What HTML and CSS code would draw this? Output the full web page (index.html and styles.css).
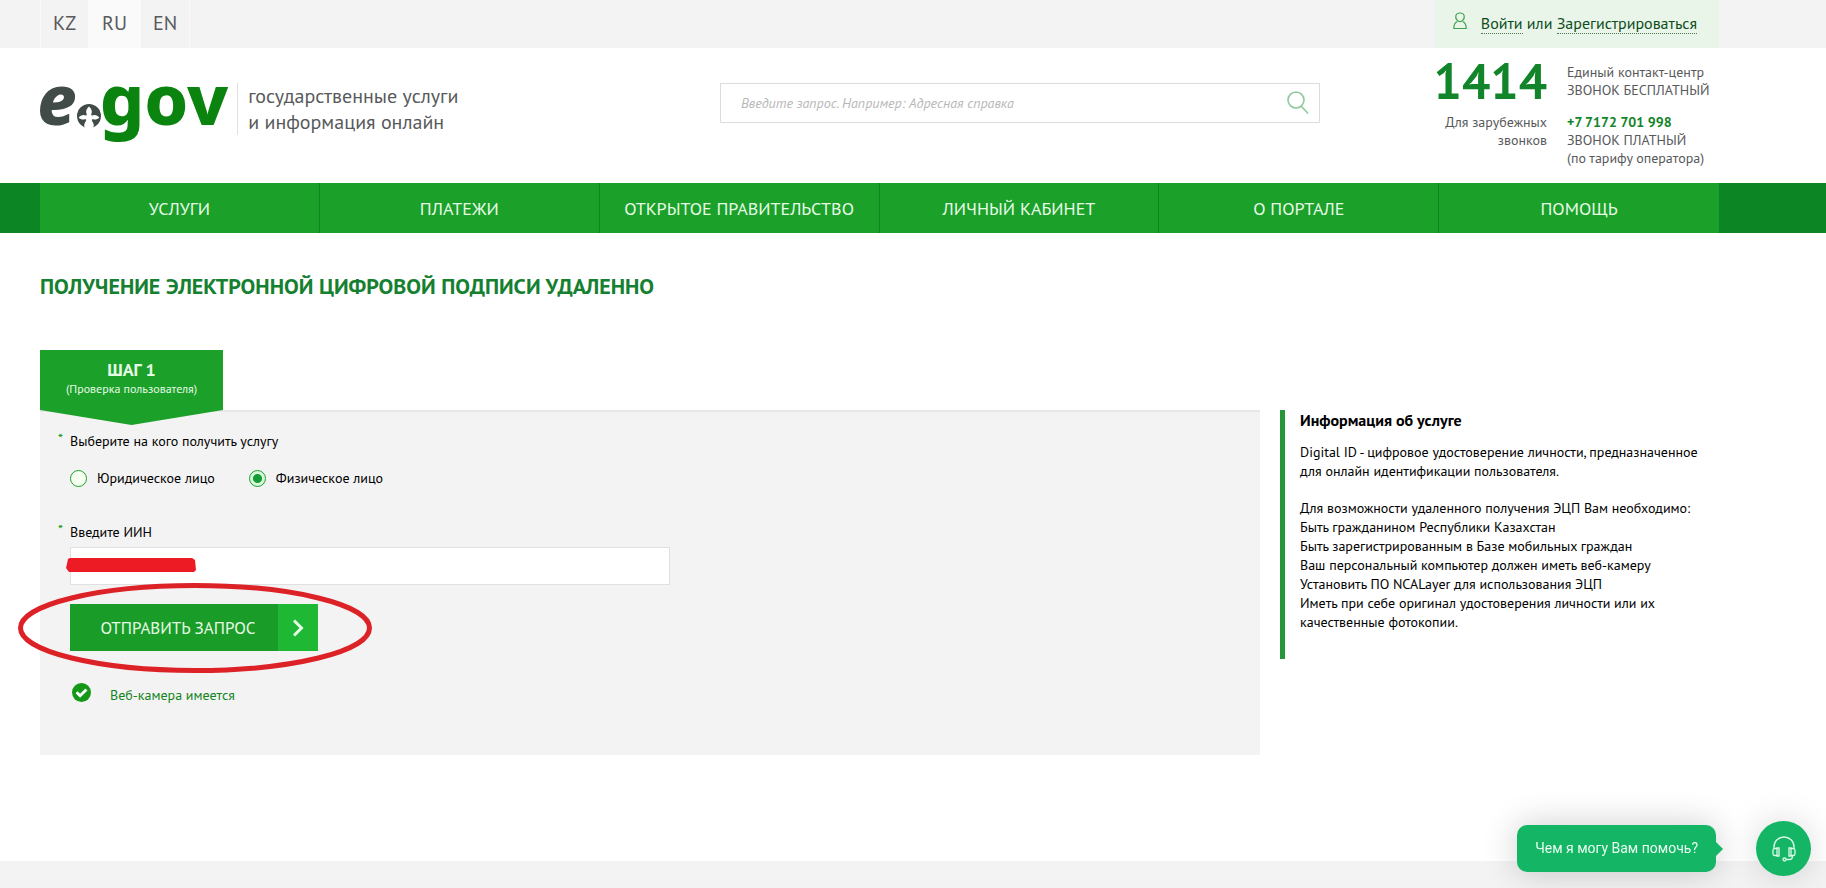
FILE: index.html
```html
<!DOCTYPE html>
<html lang="ru">
<head>
<meta charset="utf-8">
<meta name="viewport" content="width=device-width, initial-scale=1">
<title>eGov — получение ЭЦП удаленно</title>
<link rel="stylesheet" href="styles.css">
</head>
<body>
<div class="topbar wrap">
  <nav class="langs" aria-label="Язык">
    <a class="lang" href="#">KZ</a>
    <a class="lang lang-active" href="#">RU</a>
    <a class="lang" href="#">EN</a>
  </nav>
  <div class="login">
    <svg class="user-icon" viewBox="0 0 14 18" aria-hidden="true"><path d="M4.2 8.2C2.8 6.800 2.600 5 2.800 4 3.100 2 4.800 1 7 1s3.900 1 4.200 3c.2 1 0 2.800-1.400 4.200C9 9.200 8 9.600 7 9.600S5 9.200 4.200 8.200ZM4.300 9.500C2 10.500.8 12 .8 16.500h12.400C13.200 12 12 10.500 9.700 9.500"/></svg>
    <span><a href="#">Войти</a> или <a href="#">Зарегистрироваться</a></span>
  </div>
</div>

<header class="header wrap">
  <div class="brand">
    <a class="logo" href="#" aria-label="egov"><span class="logo-e">e</span><svg class="logo-mark" viewBox="0 0 24 25" aria-hidden="true"><circle cx="12" cy="12" r="12" fill="#414b48"/><path fill="#fff" d="M12 2.500C13.800 4.300 15 6 14.800 8c0 1.500-.8 2.200-.5 3 .5 1 2 .2 3.200.1 2 0 3.500 1.200 4.800 2.300-1.800 1.800-4 2.600-5.900 1.900-.9-.3-1.800-.2-1.600.8.300 1.700 1.700 2.900 2 4.900.100 1.500-.8 4-.8 4H8s-.9-2.500-.8-4c.3-2 1.700-3.200 2-4.900.2-1-.7-1.100-1.600-.8-1.900.7-4.100-.1-5.900-1.900C3 12.300 4.500 11.100 6.500 11.100c1.200.1 2.700.9 3.200-.1.300-.8-.5-1.500-.5-3C9 6 10.200 4.300 12 2.500Z"/></svg><span class="logo-gov">gov</span></a>
    <p class="slogan">государственные услуги<br>и информация онлайн</p>
  </div>
  <form class="search" role="search">
    <input class="search-input" type="text" aria-label="Поиск" placeholder="Введите запрос. Например: Адресная справка">
    <button class="search-button" type="button" aria-label="Найти"><svg viewBox="0 0 22 24" aria-hidden="true"><circle cx="9" cy="9" r="8"/><path d="m14.500 15.500 6.500 7"/></svg></button>
  </form>
  <div class="contacts">
    <div class="contacts-left">
      <strong class="short-number">1414</strong>
      <p>Для зарубежных<br>звонков</p>
    </div>
    <div class="contacts-right">
      <p>Единый контакт-центр<br>ЗВОНОК БЕСПЛАТНЫЙ</p>
      <p><strong class="phone">+7 7172 701 998</strong><br>ЗВОНОК ПЛАТНЫЙ<br>(по тарифу оператора)</p>
    </div>
  </div>
</header>

<nav class="mainnav wrap" aria-label="Главное меню">
  <ul class="menu">
    <li><a href="#">УСЛУГИ</a></li>
    <li><a href="#">ПЛАТЕЖИ</a></li>
    <li><a href="#">ОТКРЫТОЕ ПРАВИТЕЛЬСТВО</a></li>
    <li><a href="#">ЛИЧНЫЙ КАБИНЕТ</a></li>
    <li><a href="#">О ПОРТАЛЕ</a></li>
    <li><a href="#">ПОМОЩЬ</a></li>
  </ul>
</nav>

<main class="main wrap">
  <h1 class="title">ПОЛУЧЕНИЕ ЭЛЕКТРОННОЙ ЦИФРОВОЙ ПОДПИСИ УДАЛЕННО</h1>
  <div class="step">
    <strong class="step-name">ШАГ 1</strong>
    <span class="step-note">(Проверка пользователя)</span>
  </div>
  <div class="columns">
    <form class="panel">
      <fieldset class="choice">
        <legend class="field-label">Выберите на кого получить услугу</legend>
        <div class="radios">
          <label class="radio"><input type="radio" name="person">Юридическое лицо</label>
          <label class="radio"><input type="radio" name="person" checked>Физическое лицо</label>
        </div>
      </fieldset>
      <label class="field-label" for="iin">Введите ИИН</label>
      <div class="iin">
        <input class="iin-input" id="iin" type="text">
        <svg class="redaction" viewBox="0 0 132 16" aria-hidden="true"><path d="M4 1h124l3 2 1 10-2 2H3l-3-4 1-4 1-5z" fill="#ed1c24"/></svg>
      </div>
      <div class="actions">
        <button class="submit" type="button"><span class="submit-text">ОТПРАВИТЬ ЗАПРОС</span><span class="submit-arrow"><svg viewBox="0 0 12 18" aria-hidden="true"><path d="m2 1.500 7.500 7.500L2 16.500"/></svg></span></button>
        <svg class="highlight" viewBox="0 0 354 90" aria-hidden="true"><ellipse cx="177" cy="45" rx="174.500" ry="42.500"/></svg>
      </div>
      <p class="camera"><svg class="check" viewBox="0 0 20 20" aria-hidden="true"><circle cx="10" cy="10" r="10" fill="#159818"/><path d="m4.800 9.800 3.700 3.700 6.700-6.700" fill="none" stroke="#fff" stroke-width="3"/></svg>Веб-камера имеется</p>
    </form>
    <aside class="info">
      <h2>Информация об услуге</h2>
      <p>Digital ID - цифровое удостоверение личности, предназначенное<br>для онлайн идентификации пользователя.</p>
      <p>Для возможности удаленного получения ЭЦП Вам необходимо:<br>Быть гражданином Республики Казахстан<br>Быть зарегистрированным в Базе мобильных граждан<br>Ваш персональный компьютер должен иметь веб-камеру<br>Установить ПО NCALayer для использования ЭЦП<br>Иметь при себе оригинал удостоверения личности или их<br>качественные фотокопии.</p>
    </aside>
  </div>
</main>
<footer class="footer"></footer>

<div class="chat">
  <div class="bubble">Чем я могу Вам помочь?</div>
  <button class="chat-button" type="button" aria-label="Открыть чат"><svg viewBox="0 0 24 26" aria-hidden="true"><path d="M2 12v-1C2 5 6.500 1 12 1s10 4 10 10v1M5 12.500H2.500C1.500 12.500 1 13.200 1 14.500v3c0 1.300.5 2 1.500 2H5zM5 12h2v8H5zM19 12.500h2.500c1 0 1.500.7 1.500 2v3c0 1.300-.5 2-1.500 2H19zM19 12h-2v8h2zM20.500 19.500v1c0 2-1.500 3-3.500 3h-3"/><circle cx="12.500" cy="23.500" r="1.500"/></svg></button>
</div>
</body>
</html>
```
FILE: styles.css
```css
* { box-sizing: border-box; }

body {
  margin: 0;
  min-height: 100vh;
  display: flex;
  flex-direction: column;
  font-family: "PT Sans", Roboto, "Open Sans", sans-serif;
  font-size: 14px;
  line-height: 19px;
  color: #000;
  background: #fff;
}

p, h1, h2, ul { margin: 0; padding: 0; }
a { color: inherit; text-decoration: none; }
button { border: 0; padding: 0; background: none; font: inherit; cursor: pointer; }

.wrap { padding-left: 40px; padding-right: 107px; }

.topbar {
  display: flex;
  justify-content: space-between;
  height: 48px;
  background: #f3f3f3;
}
.langs { display: flex; border-left: 1px solid #fafafa; border-right: 1px solid #fafafa; }
.lang {
  padding: 0 12px;
  font-size: 20px;
  line-height: 47px;
  color: #58595b;
}
.lang-active { padding: 0 14px; background: #fafafa; }
.login {
  display: flex;
  gap: 14px;
  padding: 0 22px 0 18px;
  background: #eaf5ea;
  font-size: 16px;
  line-height: 47px;
  color: #0d4d1c;
}
.login a { border-bottom: 1px dotted #4b7a55; }
.user-icon {
  width: 14px;
  height: 18px;
  margin-top: 12px;
  fill: none;
  stroke: #3fa04f;
  stroke-width: 1.2;
}

.header { display: flex; align-items: flex-start; height: 135px; }
.brand { flex: 1; display: flex; padding-top: 35px; }
.logo {
  display: flex;
  height: 52px;
  margin-left: -3px;
  padding-right: 9px;
  border-right: 1px solid #e0e0e0;
  font-family: "Noto Sans", sans-serif;
  font-size: 70px;
  font-weight: 800;
  line-height: 31px;
}
.logo-e { color: #414b48; font-style: italic; }
.logo-gov { color: #0a840f; }
.logo-mark { width: 24px; height: 25px; margin-top: 21px; margin-right: -1px; }
.slogan { padding-left: 10px; font-size: 20px; line-height: 26px; color: #58595b; }

.search {
  display: flex;
  width: 600px;
  height: 40px;
  margin: 35px 117px 0 20px;
  border: 1px solid #dcdcdc;
}
.search-input {
  flex: 1;
  min-width: 0;
  padding: 0 20px;
  border: 0;
  background: none;
  font: italic 14px "PT Sans", Roboto, sans-serif;
}
.search-input::placeholder { color: #b8b8b8; opacity: 1; }
.search-button { width: 22px; margin-right: 10px; }
.search-button svg { display: block; width: 22px; height: 24px; fill: none; stroke: #8fc99a; stroke-width: 1.6; }

.contacts { display: flex; gap: 20px; width: 282px; padding-top: 6px; line-height: 18px; color: #58595b; }
.contacts-left { display: flex; flex-direction: column; align-items: flex-end; width: 110px; text-align: right; }
.short-number { font-size: 50px; line-height: 53px; margin-bottom: 6px; color: #12842a; }
.contacts-right { flex: 1; white-space: nowrap; padding-top: 9px; }
.contacts-right p + p { margin-top: 14px; }
.phone { color: #12842a; }

.mainnav { background: #0c8624; }
.menu { display: grid; grid-template-columns: repeat(6, 1fr); list-style: none; background: #1ba029; }
.menu a {
  display: block;
  border-right: 1px solid #128521;
  padding-top: 1px;
  font-size: 18px;
  line-height: 49px;
  text-align: center;
  color: #e6fbe6;
}
.menu li:last-child a { border-right: 0; }

.main { flex: 1; padding-top: 40px; }
.title { font-size: 22px; line-height: 27px; color: #148030; }
.step {
  position: relative;
  z-index: 1;
  width: 183px;
  height: 75px;
  margin-top: 50px;
  margin-bottom: -15px;
  padding-top: 9px;
  background: #1ba029;
  clip-path: polygon(0 0, 100% 0, 100% 60px, 50% 100%, 0 60px);
  text-align: center;
  color: #e6fbe6;
}
.step-name { display: block; font-size: 18px; line-height: 22px; }
.step-note { display: block; font-size: 12px; line-height: 15px; }

.columns { display: grid; grid-template-columns: minmax(0, 1fr) 439px; gap: 20px; align-items: start; }
.panel { padding: 19px 30px 47px; border-top: 2px solid #e7e7e7; background: #f3f3f3; }
.choice { margin: 0 0 34px; padding: 0; border: 0; }
.field-label { display: block; position: relative; padding: 0; font-size: 14px; line-height: 20px; }
.field-label::before { content: "*"; position: absolute; left: -12px; top: -3px; color: #1ba029; }
.radios { display: flex; gap: 34px; padding-top: 17px; }
.radio { display: flex; align-items: center; gap: 10px; line-height: 20px; }
.radio input {
  appearance: none;
  width: 17px;
  height: 17px;
  margin: 0;
  border: 1px solid #1ba029;
  border-radius: 50%;
  background: #f7fff0;
}
.radio input:checked { background: radial-gradient(circle, #159c34 0 4px, #d5f7da 5px); }
.iin { position: relative; max-width: 600px; margin-top: 5px; }
.iin-input { display: block; width: 100%; height: 38px; padding: 0 10px; border: 1px solid #e0e0e0; background: #fff; font: inherit; }
.redaction { position: absolute; left: -4px; top: 10px; width: 130px; height: 16px; }
.actions { position: relative; width: 248px; margin-top: 19px; }
.submit { display: flex; width: 100%; height: 47px; background: #1a9c28; color: #e6fbe6; font-size: 17px; line-height: 48px; }
.submit-text { flex: 1; padding-left: 8px; text-align: center; }
.submit-arrow { display: flex; align-items: center; justify-content: center; width: 40px; height: 47px; background: #1eb834; }
.submit-arrow svg { width: 12px; height: 18px; fill: none; stroke: #e6fbe6; stroke-width: 3; }
.highlight { position: absolute; left: -52px; top: -21px; width: 354px; height: 90px; fill: none; stroke: #dc2127; stroke-width: 5; pointer-events: none; }
.camera { display: flex; gap: 19px; margin-top: 32px; padding-left: 2px; line-height: 25px; color: #128521; }
.check { width: 19px; height: 19px; }

.info { min-height: 249px; padding: 0 0 0 15px; border-left: 5px solid #27963b; white-space: nowrap; }
.info h2 { font-size: 16px; line-height: 20px; margin-bottom: 13px; }
.info p { margin-bottom: 18px; }

.footer { height: 27px; background: #f3f3f3; }

.chat { position: fixed; right: 15px; bottom: 12px; display: flex; align-items: center; gap: 40px; }
.bubble {
  position: relative;
  padding: 0 18px;
  border-radius: 10px;
  background: #15b566;
  box-shadow: 0 0 35px rgba(0, 0, 0, .2);
  font-family: Roboto, sans-serif;
  line-height: 47px;
  color: #e8fdf0;
}
.bubble::after {
  content: "";
  position: absolute;
  left: 100%;
  top: 17px;
  border: 7px solid transparent;
  border-left-color: #15b566;
  border-right-width: 0;
}
.chat-button {
  display: grid;
  place-items: center;
  width: 55px;
  height: 55px;
  border-radius: 50%;
  background: #15b566;
  box-shadow: 0 0 35px rgba(0, 0, 0, .15);
}
.chat-button svg { width: 24px; height: 26px; fill: none; stroke: #d9fbe6; stroke-width: 1.3; }
```
